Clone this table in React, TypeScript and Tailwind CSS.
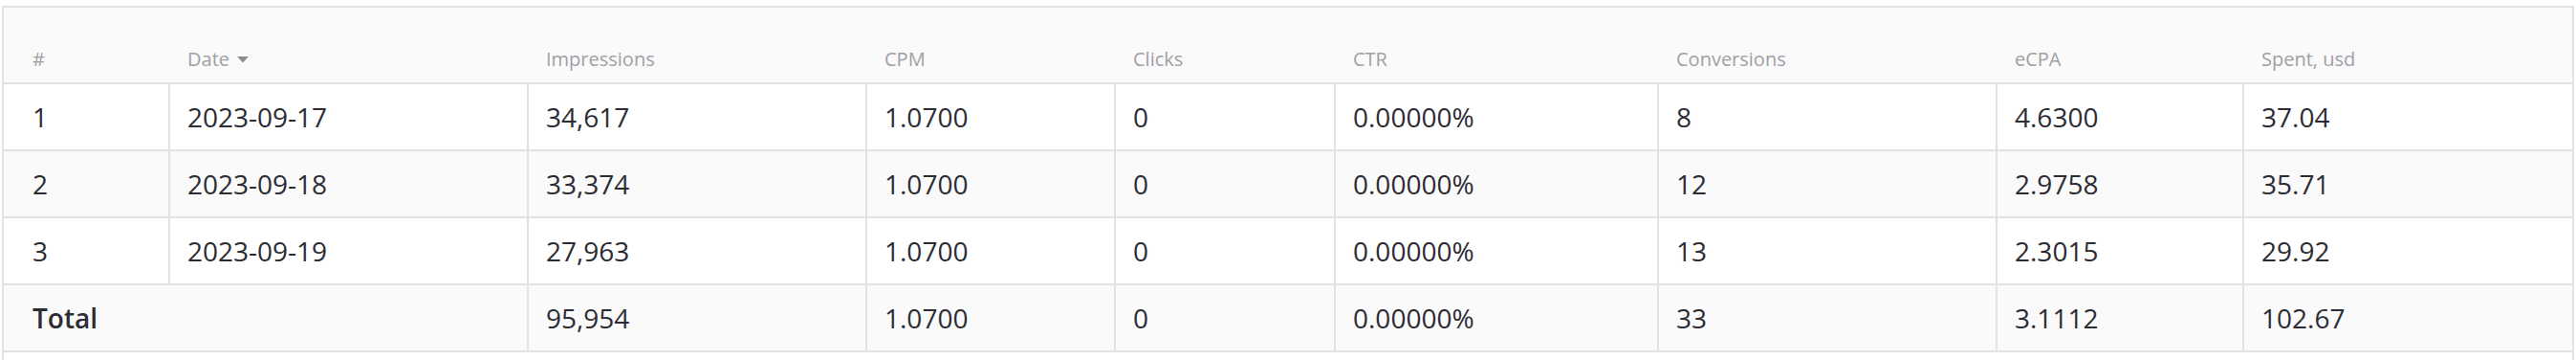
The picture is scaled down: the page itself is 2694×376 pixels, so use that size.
import React from 'react';

interface StatRow {
    id: number;
    date: string;
    impressions: string;
    cpm: string;
    clicks: string;
    ctr: string;
    conversions: string;
    ecpa: string;
    spent: string;
}

const rows: StatRow[] = [
    { id: 1, date: '2023-09-17', impressions: '34,617', cpm: '1.0700', clicks: '0', ctr: '0.00000%', conversions: '8', ecpa: '4.6300', spent: '37.04' },
    { id: 2, date: '2023-09-18', impressions: '33,374', cpm: '1.0700', clicks: '0', ctr: '0.00000%', conversions: '12', ecpa: '2.9758', spent: '35.71' },
    { id: 3, date: '2023-09-19', impressions: '27,963', cpm: '1.0700', clicks: '0', ctr: '0.00000%', conversions: '13', ecpa: '2.3015', spent: '29.92' },
];

const total = { impressions: '95,954', cpm: '1.0700', clicks: '0', ctr: '0.00000%', conversions: '33', ecpa: '3.1112', spent: '102.67' };

// column widths measured off the screenshot
const gridCols = 'grid grid-cols-[172px_375px_354px_260px_230px_338px_354px_258px_345px]';

const headers = ['Impressions', 'CPM', 'Clicks', 'CTR', 'Conversions', 'eCPA', 'Spent, usd'];

const Cell: React.FC<{ children?: React.ReactNode; first?: boolean; className?: string }> = ({ children, first, className = '' }) => (
    <div className={`flex items-center h-[68px] ${first ? 'pl-[30px]' : 'border-l-2 border-[#e2e2e2] pl-[18px]'} ${className}`}>
        {children}
    </div>
);

const App: React.FC = () => {
    return (
        <div className="w-[2694px] h-[376px] bg-white px-[2px] pt-[6px] overflow-hidden" style={{ fontFamily: '"Open Sans", "Liberation Sans", sans-serif' }}>
            <div className="border-x-2 border-t-2 border-[#e2e2e2] h-full">
                {/* Header */}
                <div className={`${gridCols} h-[80px] bg-[#fafafa] border-b-2 border-[#e2e2e2] text-[20px] leading-[28px] font-normal text-[#a0a0a5]`}>
                    <div className="flex items-end pb-[10px] pl-[30px]">#</div>
                    <div className="flex items-end pb-[10px] pl-[20px]">
                        <span className="flex items-center gap-[8px]">
                            Date
                            <svg width="12" height="7" viewBox="0 0 12 7" className="mt-[1px]">
                                <path d="M0 0 L12 0 L6 6.5 Z" fill="#8c8c92" />
                            </svg>
                        </span>
                    </div>
                    {headers.map((h) => (
                        <div key={h} className="flex items-end pb-[10px] pl-[20px]">{h}</div>
                    ))}
                </div>

                {/* Body rows */}
                {rows.map((r, index) => (
                    <div
                        key={r.id}
                        className={`${gridCols} border-b-2 border-[#e2e2e2] text-[28px] leading-[36px] text-[#2c2c34] ${index % 2 === 1 ? 'bg-[#fafafa]' : 'bg-white'}`}
                    >
                        <Cell first>{r.id}</Cell>
                        <Cell>{r.date}</Cell>
                        <Cell>{r.impressions}</Cell>
                        <Cell>{r.cpm}</Cell>
                        <Cell>{r.clicks}</Cell>
                        <Cell>{r.ctr}</Cell>
                        <Cell>{r.conversions}</Cell>
                        <Cell>{r.ecpa}</Cell>
                        <Cell>{r.spent}</Cell>
                    </div>
                ))}

                {/* Total */}
                <div className={`${gridCols} border-b-2 border-[#e2e2e2] text-[28px] leading-[36px] text-[#2c2c34] bg-[#fafafa]`}>
                    <Cell first className="col-span-2 font-semibold">Total</Cell>
                    <Cell>{total.impressions}</Cell>
                    <Cell>{total.cpm}</Cell>
                    <Cell>{total.clicks}</Cell>
                    <Cell>{total.ctr}</Cell>
                    <Cell>{total.conversions}</Cell>
                    <Cell>{total.ecpa}</Cell>
                    <Cell>{total.spent}</Cell>
                </div>
            </div>
        </div>
    );
};

export default App;
